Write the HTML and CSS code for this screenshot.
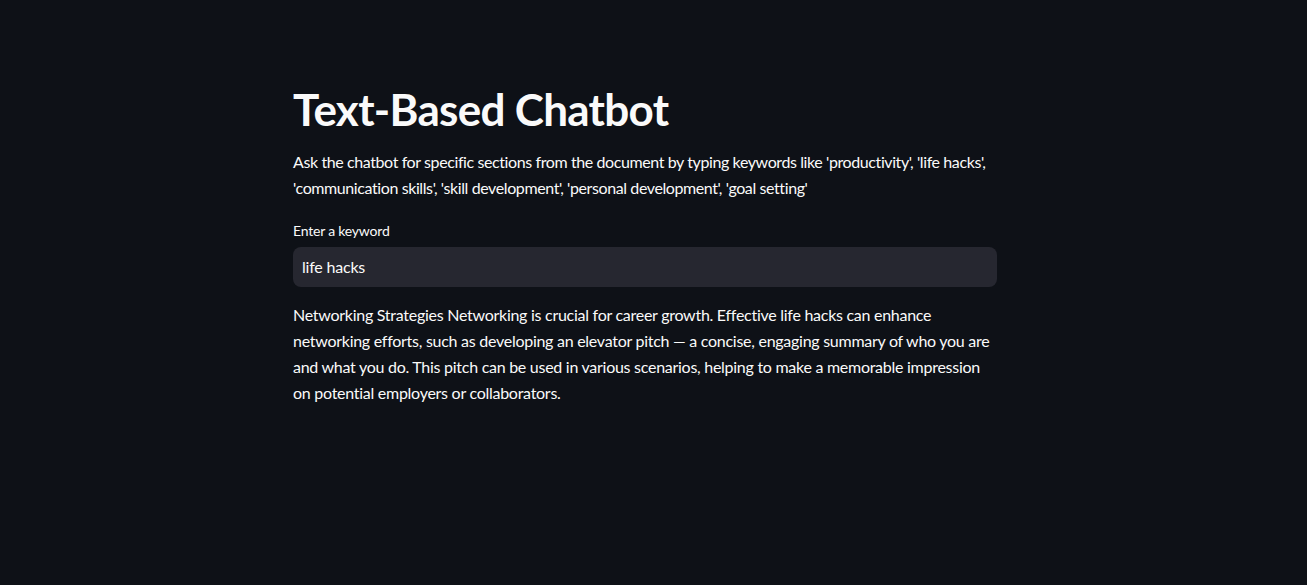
FILE: index.html
```html
<!DOCTYPE html>
<html lang="en">
<head>
<meta charset="utf-8">
<title>Text-Based Chatbot</title>
<link rel="stylesheet" href="styles.css">
</head>
<body>
<main class="main">
  <h1 class="title">Text-Based Chatbot</h1>
  <p class="intro">Ask the chatbot for specific sections from the document by typing keywords like 'productivity', 'life hacks', 'communication skills', 'skill development', 'personal development', 'goal setting'</p>
  <div class="field">
    <label class="label" for="kw">Enter a keyword</label>
    <input class="input" id="kw" type="text" value="life hacks">
  </div>
  <p class="result">Networking Strategies Networking is crucial for career growth. Effective life hacks can enhance networking efforts, such as developing an elevator pitch — a concise, engaging summary of who you are and what you do. This pitch can be used in various scenarios, helping to make a memorable impression on potential employers or collaborators.</p>
</main>
</body>
</html>
```

FILE: styles.css
```css
html, body {
  margin: 0;
  padding: 0;
  background: #0e1117;
  color: #fafafa;
  font-family: "Lato", "Liberation Sans", sans-serif;
  height: 100%;
}

.main {
  width: 704px;
  margin-left: 293px;
  padding-top: 83px;
}

.title {
  margin: 0;
  font-size: 44px;
  line-height: 1.2;
  font-weight: 700;
  letter-spacing: -0.7px;
}

.intro {
  margin: 13px 0 0;
  font-size: 16px;
  letter-spacing: -0.4px;
  line-height: 26px;
}

.field {
  margin-top: 20px;
  display: flex;
  flex-direction: column;
}

.label {
  font-size: 14px;
  letter-spacing: -0.2px;
  line-height: 20px;
  margin-bottom: 6px;
}

.input {
  height: 40px;
  box-sizing: border-box;
  border: none;
  border-radius: 8px;
  background: #262730;
  color: #fafafa;
  font-family: inherit;
  font-size: 16px;
  letter-spacing: -0.2px;
  padding: 0 9px;
  outline: none;
}

.result {
  margin: 15px 0 0;
  font-size: 16px;
  letter-spacing: -0.27px;
  line-height: 26px;
}
```
